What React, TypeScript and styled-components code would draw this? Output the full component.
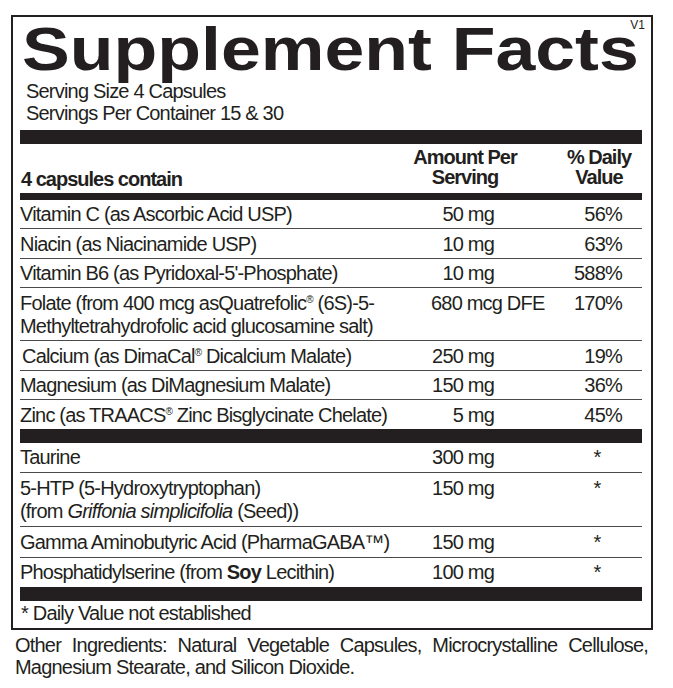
import React from "react";
import styled, { createGlobalStyle } from "styled-components";

const ink = "#231f20";

const GlobalStyle = createGlobalStyle`
  html, body {
    margin: 0;
    padding: 0;
    background: #ffffff;
  }
  body {
    font-family: "Liberation Sans Narrow", "Liberation Sans", Arial, sans-serif;
    color: ${ink};
    letter-spacing: -0.8px;
  }
`;

const Page = styled.div`
  width: 673px;
  box-sizing: border-box;
  padding: 15px 0 0 11px;
`;

const Panel = styled.section`
  position: relative;
  width: 642px;
  box-sizing: border-box;
  border: 2px solid ${ink};
  padding: 1px 9px 0 7px;
`;

const Title = styled.h1`
  width: max-content;
  margin: 0 0 0 2px;
  font-family: "Liberation Sans", Arial, sans-serif;
  font-weight: 700;
  font-size: 62px;
  line-height: 61px;
  letter-spacing: 0;
  white-space: nowrap;
  transform: scaleX(1.155);
  transform-origin: left center;
`;

const Version = styled.span`
  position: absolute;
  top: 2px;
  right: 6px;
  font-size: 12px;
  line-height: 12px;
  letter-spacing: 0;
`;

const Serving = styled.div`
  margin: 1px 0 5px;
  padding-left: 6px;
  font-size: 20px;
  line-height: 22.4px;
`;

const Bar = styled.div<{ $h: number }>`
  height: ${({ $h }) => $h}px;
  background: ${ink};
`;

const HeadRow = styled.div`
  display: grid;
  grid-template-columns: 385px 120px 34px 80px 3px;
  align-items: end;
  padding: 3px 0 6px;
  font-weight: 700;
  font-size: 20px;
  line-height: 20px;
  letter-spacing: -1px;
`;

const HeadName = styled.div`
  grid-column: 1;
  padding-left: 1px;
  margin-bottom: -2px;
`;

const HeadCol = styled.div<{ $col: number }>`
  grid-column: ${({ $col }) => $col};
  text-align: center;
  white-space: nowrap;
`;

const Row = styled.div<{ $last?: boolean; $loose?: boolean }>`
  display: grid;
  grid-template-columns: 411px 63px 78px 50px 20px;
  padding: 3.5px 0 ${({ $loose }) => ($loose ? 2.5 : 1.5)}px;
  border-bottom: ${({ $last }) => ($last ? "none" : "1px solid #4a4a4a")};
  font-size: 20px;
  line-height: 23.5px;
`;

const Name = styled.div<{ $indent?: number }>`
  grid-column: 1;
  padding-left: ${({ $indent }) => $indent ?? 0}px;
  white-space: nowrap;
`;

const Amount = styled.div`
  grid-column: 2;
  text-align: right;
  white-space: nowrap;
`;

const Daily = styled.div<{ $star?: boolean }>`
  grid-column: 4;
  text-align: ${({ $star }) => ($star ? "center" : "right")};
`;

const Reg = styled.sup`
  font-size: 0.5em;
  line-height: 0;
  vertical-align: 0.75em;
`;

const Note = styled.p`
  margin: 0;
  padding: 0 0 3px 1px;
  font-size: 20px;
  line-height: 24px;
`;

const Other = styled.p`
  margin: 3.5px 0 0 4px;
  width: 633px;
  text-align: justify;
  font-size: 20px;
  line-height: 22.3px;
`;

type Nutrient = {
  name: React.ReactNode;
  amount: string;
  daily: string;
  indent?: number;
};

const vitamins: Nutrient[] = [
  { name: "Vitamin C (as Ascorbic Acid USP)", amount: "50 mg", daily: "56%" },
  { name: "Niacin (as Niacinamide USP)", amount: "10 mg", daily: "63%" },
  { name: "Vitamin B6 (as Pyridoxal-5'-Phosphate)", amount: "10 mg", daily: "588%" },
  {
    name: (
      <>
        Folate (from 400 mcg asQuatrefolic<Reg>®</Reg> (6S)-5-
        <br />
        Methyltetrahydrofolic acid glucosamine salt)
      </>
    ),
    amount: "680 mcg DFE",
    daily: "170%",
  },
  {
    name: (
      <>
        Calcium (as DimaCal<Reg>®</Reg> Dicalcium Malate)
      </>
    ),
    amount: "250 mg",
    daily: "19%",
    indent: 2,
  },
  { name: "Magnesium (as DiMagnesium Malate)", amount: "150 mg", daily: "36%" },
  {
    name: (
      <>
        Zinc (as TRAACS<Reg>®</Reg> Zinc Bisglycinate Chelate)
      </>
    ),
    amount: "5 mg",
    daily: "45%",
  },
];

const others: Nutrient[] = [
  { name: "Taurine", amount: "300 mg", daily: "*" },
  {
    name: (
      <>
        5-HTP (5-Hydroxytryptophan)
        <br />
        (from <i>Griffonia simplicifolia</i> (Seed))
      </>
    ),
    amount: "150 mg",
    daily: "*",
  },
  { name: "Gamma Aminobutyric Acid (PharmaGABA™)", amount: "150 mg", daily: "*" },
  {
    name: (
      <>
        Phosphatidylserine (from <b>Soy</b> Lecithin)
      </>
    ),
    amount: "100 mg",
    daily: "*",
  },
];

const NutrientRows: React.FC<{ items: Nutrient[]; loose?: boolean }> = ({ items, loose }) => (
  <>
    {items.map((item, i) => (
      <Row key={i} $last={i === items.length - 1} $loose={loose}>
        <Name $indent={item.indent}>{item.name}</Name>
        <Amount>{item.amount}</Amount>
        <Daily $star={item.daily === "*"}>{item.daily}</Daily>
      </Row>
    ))}
  </>
);

export default function App() {
  return (
    <Page>
      <GlobalStyle />
      <Panel>
        <Version>V1</Version>
        <Title>Supplement Facts</Title>
        <Serving>
          Serving Size 4 Capsules
          <br />
          Servings Per Container 15 &amp; 30
        </Serving>
        <Bar $h={14} />
        <HeadRow>
          <HeadName>4 capsules contain</HeadName>
          <HeadCol $col={2}>
            Amount Per
            <br />
            Serving
          </HeadCol>
          <HeadCol $col={4}>
            % Daily
            <br />
            Value
          </HeadCol>
        </HeadRow>
        <Bar $h={7} />
        <NutrientRows items={vitamins} />
        <Bar $h={14} />
        <NutrientRows items={others} loose />
        <Bar $h={14} />
        <Note>* Daily Value not established</Note>
      </Panel>
      <Other>
        Other Ingredients: Natural Vegetable Capsules, Microcrystalline Cellulose, Magnesium
        Stearate, and Silicon Dioxide.
      </Other>
    </Page>
  );
}
